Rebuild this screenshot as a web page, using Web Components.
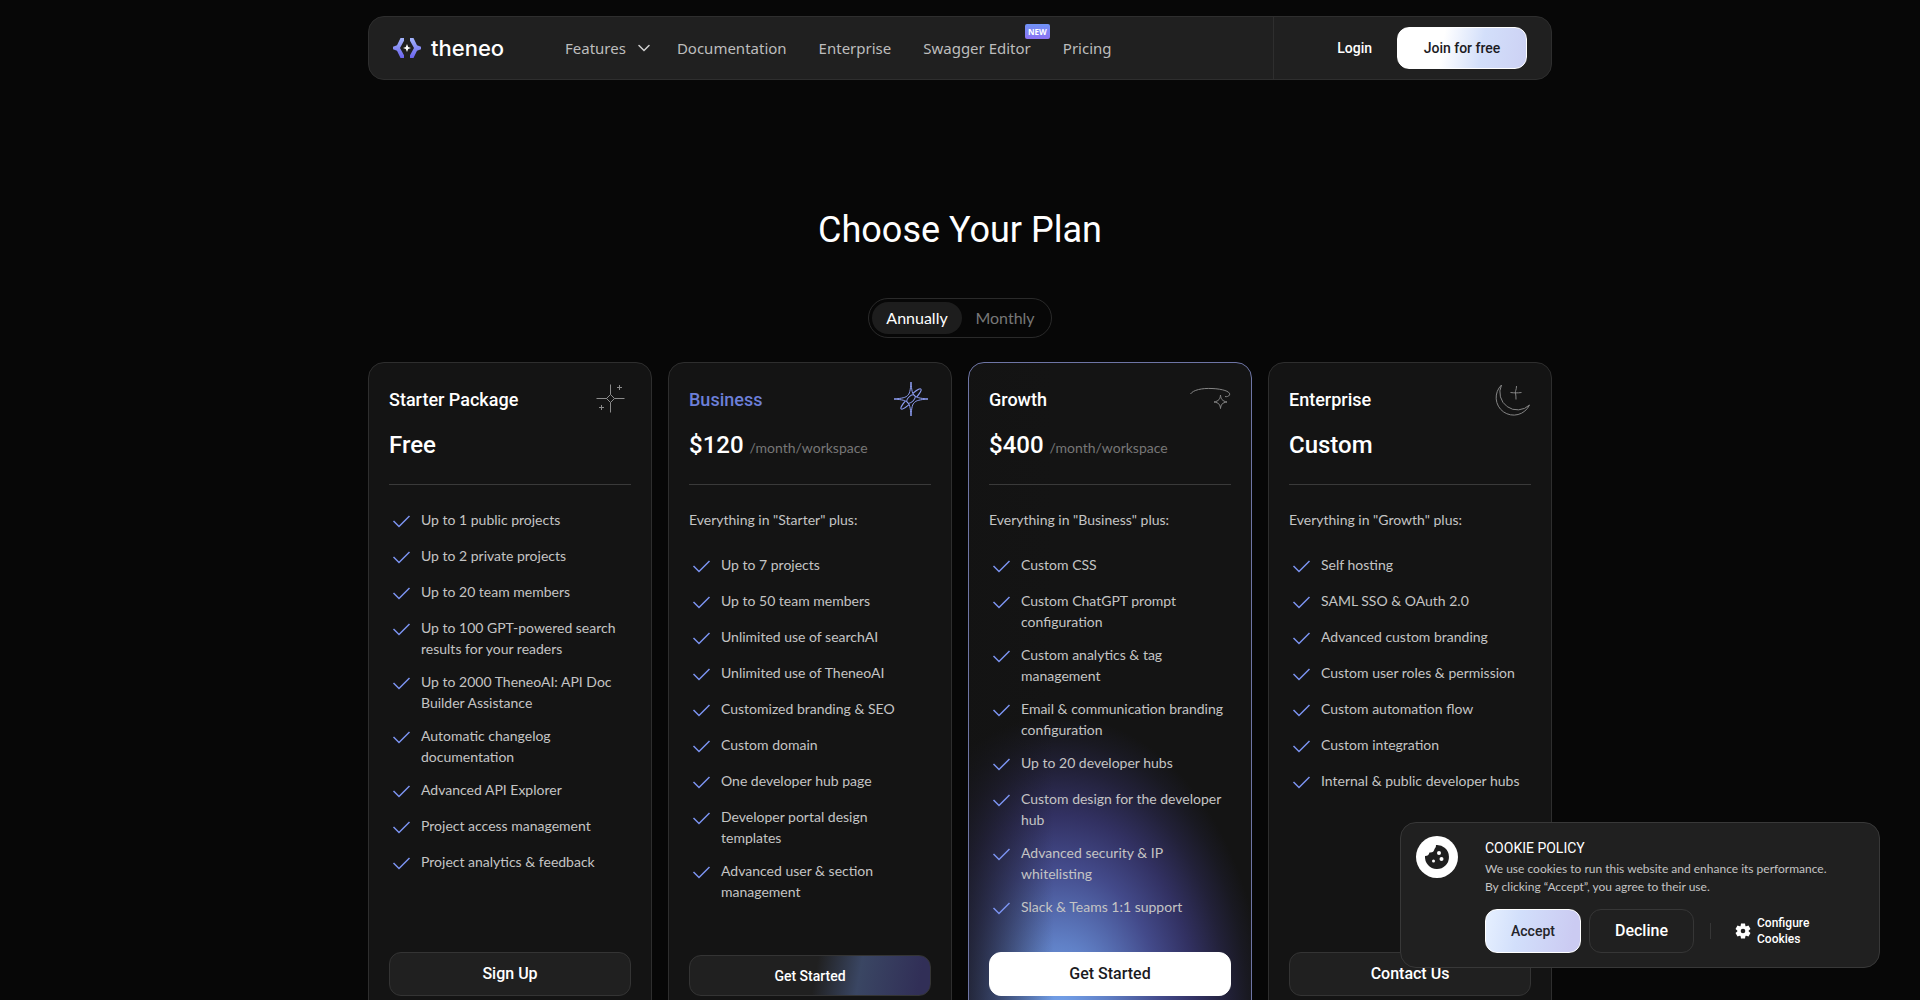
<!DOCTYPE html>
<html lang="en">
<head>
<meta charset="utf-8">
<title>Theneo – Pricing</title>
<style>
:root {
  --bg: #070707; --panel: #141414; --raised: #202020; --line: #2e2e2e;
  --text: #c4c4c4; --muted: #777; --accent: #7b93f0;
  --head: Roboto, "Liberation Sans", sans-serif;
  --body: Lato, "Open Sans", sans-serif;
  --nav: "Noto Sans", "Open Sans", sans-serif;
}
body { margin: 0; background: var(--bg); color: var(--text); font: 14px/21px var(--body); }
</style>
</head>
<body>
<pricing-page></pricing-page>
<script>
const define = (name, html) => {
  const tpl = document.createElement('template');
  tpl.innerHTML = '<style>*{box-sizing:border-box}</style>' + html;
  customElements.define(name, class extends HTMLElement {
    constructor() {
      super();
      this.attachShadow({ mode: 'open' }).append(tpl.content.cloneNode(true));
    }
  });
};

define('theneo-logo', `
<style>
:host { display: block; }
a { display: flex; align-items: center; gap: 10px; color: #fff; text-decoration: none; font: 500 22px/28px Inter, sans-serif; }
svg { display: block; }
</style>
<a href="#">
  <svg width="28" height="20" viewBox="0 0 28 22" preserveAspectRatio="none" aria-hidden="true">
    <defs><linearGradient id="g" x1="0" y1="0" x2="0" y2="1"><stop offset="0" stop-color="#a3b4fb"/><stop offset="1" stop-color="#6a63ee"/></linearGradient></defs>
    <path fill="url(#g)" d="M7.500 0H11v3L7 11l4 8v3H7.500L4 14l-4-1.500v-3L4 8z"/>
    <path fill="url(#g)" d="M20.500 0H17v3l4 8-4 8v3h3.500L24 14l4-1.500v-3L24 8z"/>
    <path fill="#fff" d="M14 6.500l1.200 3.300L18 11l-2.800 1.200L14 15.500l-1.200-3.300L10 11l2.800-1.200z"/>
  </svg>
  <span>theneo</span>
</a>`);

define('site-header', `
<style>
:host { display: block; }
header { display: flex; height: 64px; border: 1px solid var(--line); border-radius: 16px; background: var(--raised); padding: 0 24px; align-items: center; }
theneo-logo { width: 172px; }
nav { display: flex; align-items: center; gap: 32px; flex: 1; font: 15px/24px var(--nav); }
nav a, nav button { color: #bdbdbd; text-decoration: none; background: none; border: 0; padding: 0; font: inherit; display: flex; align-items: center; gap: 12px; position: relative; }
nav button { margin-right: -5px; }
.badge { position: absolute; right: -19px; bottom: 21px; padding: 0 3px; border-radius: 2px; background: linear-gradient(#6f93f6, #8c72f3); color: #fff; font: 700 8px/15px "Open Sans", sans-serif; }
.side { display: flex; align-items: center; justify-content: flex-end; gap: 25px; height: 62px; width: 254px; border-left: 1px solid var(--line); }
.login { color: #fff; text-decoration: none; font: 500 14px/20px var(--head); }
.join { width: 130px; height: 42px; border: 1px solid #fff; border-radius: 12px; background: linear-gradient(100deg, #fff 35%, #d3dffa 65%, #ccd1f4); color: #1b1b1f; font: 500 14px/20px var(--head); }
</style>
<header>
  <theneo-logo></theneo-logo>
  <nav>
    <button type="button">Features <svg width="12" height="16" viewBox="2 0 12 16" fill="none" stroke="#d0d0d0" stroke-width="1.500" stroke-linecap="round" aria-hidden="true"><path d="M3 5.500L8 10.500l5-5"/></svg></button>
    <a href="#">Documentation</a>
    <a href="#">Enterprise</a>
    <a href="#">Swagger Editor<span class="badge">NEW</span></a>
    <a href="#">Pricing</a>
  </nav>
  <div class="side">
    <a class="login" href="#">Login</a>
    <button class="join" type="button">Join for free</button>
  </div>
</header>`);

define('billing-toggle', `
<style>
:host { display: block; }
fieldset { display: flex; width: 184px; height: 40px; margin: 0; padding: 3px; border: 1px solid #2a2a2a; border-radius: 20px; font: 16px/32px var(--body); }
label { display: block; width: 90px; border-radius: 16px; text-align: center; color: var(--muted); }
label + label { width: 86px; }
label:has(:checked) { background: #1d1d1d; color: #fff; }
input { appearance: none; position: absolute; margin: 0; }
</style>
<fieldset aria-label="Billing period">
  <label><input type="radio" name="period" checked>Annually</label>
  <label><input type="radio" name="period">Monthly</label>
</fieldset>`);

define('plan-feature', `
<style>
:host { display: flex; gap: 8px; min-height: 24px; }
svg { flex: none; }
</style>
<svg width="24" height="24" viewBox="0 0 24 24" fill="none" stroke="#7b93f0" stroke-width="1.500" aria-hidden="true"><path d="M4.500 12L10 17.500 20.500 7"/></svg>
<span><slot></slot></span>`);

define('plan-card', `
<style>
:host { display: flex; flex-direction: column; border: 1px solid var(--line); border-radius: 16px; background: var(--panel); padding: 20px; box-sizing: border-box; }
:host([featured]) {
  border-color: #6e75a5;
  background:
    linear-gradient(90deg, #131313b0, #13131300 30%),
    radial-gradient(205px 300px at 32% 100%, #76a6ef 0, #6080c6 24%, #434a8a 50%, #323162 67%, #222139 82%, #191922 92%, #14141400 100%),
    var(--panel);
}
header { display: grid; grid-template-columns: 1fr 42px; column-gap: 8px; row-gap: 12px; padding-bottom: 23px; border-bottom: 1px solid #3a3a3a; }
h2 { margin: 0; font: 500 18px/34px var(--head); color: #fff; }
:host([accent]) h2 { color: #6c7fd8; }
.price { grid-column: 1 / -1; display: flex; align-items: baseline; gap: 6px; font: 500 24px/32px var(--head); color: #fff; }
::slotted([slot=unit]) { font: 14px/20px var(--body); color: var(--muted); }
::slotted([slot=icon]) { display: block; width: 42px; height: 34px; overflow: visible; }
.list { display: flex; flex-direction: column; gap: 12px; flex: 1; padding: 24px 0 32px; }
button { display: block; width: 100%; height: 44px; border: 1px solid #343434; border-radius: 12px; background: var(--raised); color: #fff; font: 500 16px/24px var(--head); }
:host([accent]) button { height: 41px; font-size: 14px; background: linear-gradient(100deg, var(--raised) 52%, #3a4663 70%, #312f57 95%); }
:host([featured]) button { background: #fff; border-color: #fff; color: #1b1b1f; }
</style>
<header>
  <h2><slot name="title"></slot></h2>
  <slot name="icon"></slot>
  <div class="price"><slot name="price"></slot><slot name="unit"></slot></div>
</header>
<div class="list"><slot></slot></div>
<button type="button"><slot name="action"></slot></button>`);

define('cookie-banner', `
<style>
:host { position: fixed; right: 40px; bottom: 32px; width: 480px; display: flex; gap: 27px; border: 1px solid #383838; border-radius: 16px; background: var(--raised); padding: 13px 24px 14px 15px; box-sizing: border-box; }
.cookie { flex: none; }
h3 { margin: 0; font: 400 14px/24px var(--head); color: #fff; }
p { margin: 0; font: 12px/18px var(--body); }
.actions { display: flex; align-items: center; margin-top: 13px; }
button { height: 44px; border-radius: 12px; border: 1px solid #363636; background: none; color: #fff; font: 500 16px/24px var(--head); padding: 0; }
.accept { width: 96px; margin-right: 8px; border-color: #fff; color: #24242a; font-size: 14px; background: linear-gradient(100deg, #e6f0ff, #d2dffb 35%, #cbcbf2 90%); }
.decline { width: 105px; margin-right: 16px; }
i { width: 1px; height: 16px; background: #363636; margin-right: 24px; }
.conf { flex: 1; border: 0; border-radius: 0; display: flex; align-items: center; gap: 6px; text-align: left; font-size: 12px; line-height: 16px; }
.conf span { width: 70px; }
</style>
<svg class="cookie" width="42" height="42" viewBox="0 0 42 42" aria-hidden="true">
  <circle cx="21" cy="21" r="21" fill="#fff"/>
  <path fill="#1f1f1f" d="M20 9a12 12 0 1 1-11 11a4.500 4.500 0 0 0 4.500-3.500A4.500 4.500 0 0 0 18.500 13 4.500 4.500 0 0 0 20 9z"/>
  <circle cx="23" cy="17" r="2" fill="#fff"/><circle cx="25.500" cy="23" r="2" fill="#fff"/><circle cx="17.500" cy="25" r="1.500" fill="#fff"/>
</svg>
<div>
  <h3>COOKIE POLICY</h3>
  <p>We use cookies to run this website and enhance its performance.<br>By clicking “Accept”, you agree to their use.</p>
  <div class="actions">
    <button class="accept" type="button">Accept</button>
    <button class="decline" type="button">Decline</button>
    <i></i>
    <button class="conf" type="button">
      <svg width="16" height="16" viewBox="0 0 16 16" aria-hidden="true"><g fill="#fff"><circle cx="8" cy="8" r="5.500"/><path d="M6 .5h4l.5 3h-5zM6 15.500h4l.5-3h-5z"/><path d="M6 .5h4l.5 3h-5zM6 15.500h4l.5-3h-5z" transform="rotate(60 8 8)"/><path d="M6 .5h4l.5 3h-5zM6 15.500h4l.5-3h-5z" transform="rotate(120 8 8)"/></g><circle cx="8" cy="8" r="2.300" fill="#202020"/></svg>
      <span>Configure Cookies</span>
    </button>
  </div>
</div>`);

define('pricing-page', `
<style>
:host { display: block; height: 100vh; overflow: hidden; }
.wrap { max-width: 1184px; margin: 0 auto; padding-top: 16px; display: flex; flex-direction: column; }
h1 { margin: 126px 0 44px; text-align: center; color: #fff; font: 400 36px/48px var(--head); }
billing-toggle { align-self: center; }
.plans { display: grid; grid-template-columns: repeat(4, minmax(0, 1fr)); gap: 16px; margin-top: 24px; padding-bottom: 64px; }
p { margin: 0 0 12px; }
</style>
<div class="wrap">
  <site-header></site-header>
  <h1>Choose Your Plan</h1>
  <billing-toggle></billing-toggle>
  <section class="plans">
    <plan-card>
      <span slot="title">Starter Package</span><span slot="price">Free</span>
      <svg slot="icon" viewBox="0 0 42 34" fill="none" stroke="#8b8b8b" aria-hidden="true"><path d="M21.500 1.500v10m0 8v10M7.500 15.500h10.500m7.500 0h10M21.500 11.500l4 4-4 4-4-4zM30.500 2v5M28 4.500h5M12.500 22v5M10 24.500h5"/></svg>
      <plan-feature>Up to 1 public projects</plan-feature>
      <plan-feature>Up to 2 private projects</plan-feature>
      <plan-feature>Up to 20 team members</plan-feature>
      <plan-feature>Up to 100 GPT-powered search results for your readers</plan-feature>
      <plan-feature>Up to 2000 TheneoAI: API Doc Builder Assistance</plan-feature>
      <plan-feature>Automatic changelog documentation</plan-feature>
      <plan-feature>Advanced API Explorer</plan-feature>
      <plan-feature>Project access management</plan-feature>
      <plan-feature>Project analytics &amp; feedback</plan-feature>
      <span slot="action">Sign Up</span>
    </plan-card>
    <plan-card accent>
      <span slot="title">Business</span><span slot="price">$120</span><span slot="unit">/month/workspace</span>
      <svg slot="icon" viewBox="0 0 42 34" fill="none" stroke="#8d9df2" aria-hidden="true"><ellipse cx="22" cy="16" rx="14" ry="2.800" transform="rotate(-45 22 16)"/><path fill="#141414" d="M22-1C22.600 8 23.500 11 25.500 12.500 27 14.500 31 15.400 39 16 31 16.600 27 17.500 25.500 19.500 23.500 21 22.600 24 22 33 21.400 24 20.500 21 18.500 19.500 17 17.500 13 16.600 5 16 13 15.400 17 14.500 18.500 12.500 20.500 11 21.400 8 22-1z"/><ellipse cx="22" cy="16" rx="5" ry="2.800" transform="rotate(-45 22 16)"/></svg>
      <p>Everything in "Starter" plus:</p>
      <plan-feature>Up to 7 projects</plan-feature>
      <plan-feature>Up to 50 team members</plan-feature>
      <plan-feature>Unlimited use of searchAI</plan-feature>
      <plan-feature>Unlimited use of TheneoAI</plan-feature>
      <plan-feature>Customized branding &amp; SEO</plan-feature>
      <plan-feature>Custom domain</plan-feature>
      <plan-feature>One developer hub page</plan-feature>
      <plan-feature>Developer portal design templates</plan-feature>
      <plan-feature>Advanced user &amp; section management</plan-feature>
      <span slot="action">Get Started</span>
    </plan-card>
    <plan-card featured>
      <span slot="title">Growth</span><span slot="price">$400</span><span slot="unit">/month/workspace</span>
      <svg slot="icon" viewBox="0 0 42 34" fill="none" stroke="#858585" aria-hidden="true"><path d="M1.500 11C4 7 13 5 23 5.500 35 6 42 9 40.500 12c-.8 1.500-3 2-4.500 1.500"/><path d="M31.500 12c.5 4 1.500 6 6.500 7-5 .8-6 2.500-6.500 6.500-.5-4-1.500-5.700-6.500-6.500 5-1 6-3 6.500-7z"/></svg>
      <p>Everything in "Business" plus:</p>
      <plan-feature>Custom CSS</plan-feature>
      <plan-feature>Custom ChatGPT prompt configuration</plan-feature>
      <plan-feature>Custom analytics &amp; tag management</plan-feature>
      <plan-feature>Email &amp; communication branding configuration</plan-feature>
      <plan-feature>Up to 20 developer hubs</plan-feature>
      <plan-feature>Custom design for the developer hub</plan-feature>
      <plan-feature>Advanced security &amp; IP whitelisting</plan-feature>
      <plan-feature>Slack &amp; Teams 1:1 support</plan-feature>
      <span slot="action">Get Started</span>
    </plan-card>
    <plan-card>
      <span slot="title">Enterprise</span><span slot="price">Custom</span>
      <svg slot="icon" viewBox="0 0 42 34" fill="none" stroke="#858585" aria-hidden="true"><path d="M12.500 2A17.500 17.500 0 1 0 40.500 22 17.500 17.500 0 0 1 12.500 2z"/><path d="M27.500 3c0 4-1.500 5-1 7 .4 2 .5 4 .5 6.500M21.500 9.500c4 .5 7 .5 11 0"/></svg>
      <p>Everything in "Growth" plus:</p>
      <plan-feature>Self hosting</plan-feature>
      <plan-feature>SAML SSO &amp; OAuth 2.0</plan-feature>
      <plan-feature>Advanced custom branding</plan-feature>
      <plan-feature>Custom user roles &amp; permission</plan-feature>
      <plan-feature>Custom automation flow</plan-feature>
      <plan-feature>Custom integration</plan-feature>
      <plan-feature>Internal &amp; public developer hubs</plan-feature>
      <span slot="action">Contact Us</span>
    </plan-card>
  </section>
</div>
<cookie-banner></cookie-banner>`);
</script>
</body>
</html>
